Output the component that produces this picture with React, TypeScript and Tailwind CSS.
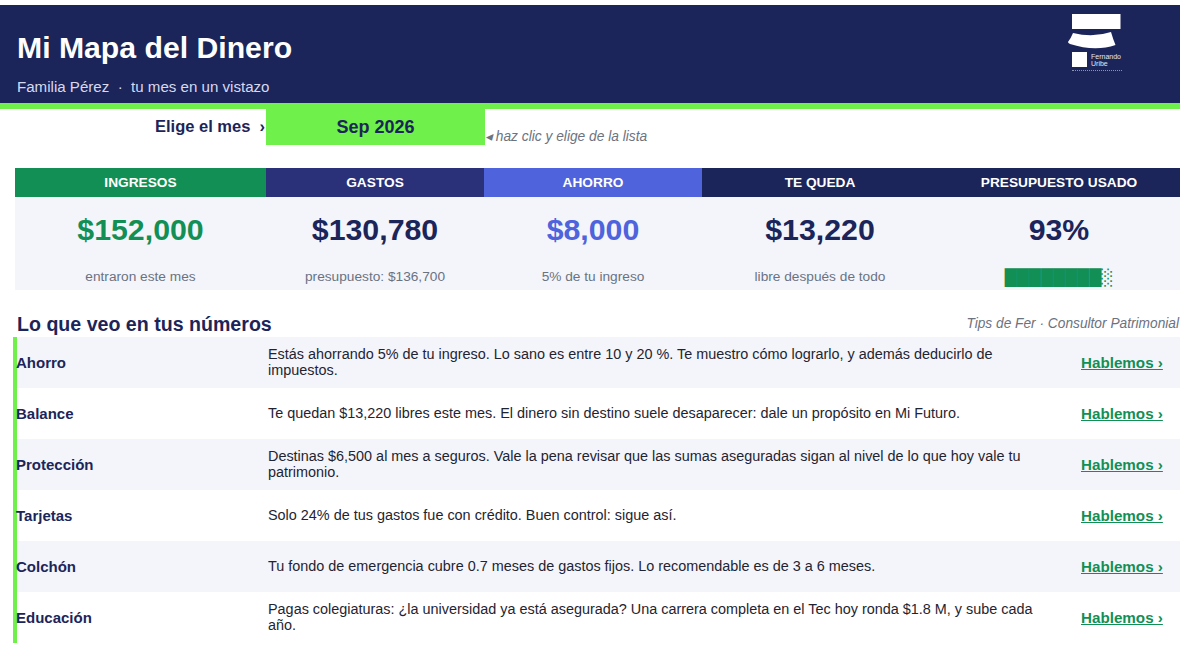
const kpis = [
  { label: "INGRESOS", head: "bg-[#128f55]", value: "$152,000", color: "text-[#128f55]", note: "entraron este mes" },
  { label: "GASTOS", head: "bg-[#2a3178]", value: "$130,780", color: "text-[#1c2559]", note: "presupuesto: $136,700" },
  { label: "AHORRO", head: "bg-[#4e63dc]", value: "$8,000", color: "text-[#4e63dc]", note: "5% de tu ingreso" },
  { label: "TE QUEDA", head: "bg-[#1c2559]", value: "$13,220", color: "text-[#1c2559]", note: "libre después de todo" },
  { label: "PRESUPUESTO USADO", head: "bg-[#1c2559]", value: "93%", color: "text-[#1c2559]", note: "" },
];

const tips = [
  { title: "Ahorro", text: "Estás ahorrando 5% de tu ingreso. Lo sano es entre 10 y 20 %. Te muestro cómo lograrlo, y además deducirlo de impuestos." },
  { title: "Balance", text: "Te quedan $13,220 libres este mes. El dinero sin destino suele desaparecer: dale un propósito en Mi Futuro." },
  { title: "Protección", text: "Destinas $6,500 al mes a seguros. Vale la pena revisar que las sumas aseguradas sigan al nivel de lo que hoy vale tu patrimonio." },
  { title: "Tarjetas", text: "Solo 24% de tus gastos fue con crédito. Buen control: sigue así." },
  { title: "Colchón", text: "Tu fondo de emergencia cubre 0.7 meses de gastos fijos. Lo recomendable es de 3 a 6 meses." },
  { title: "Educación", text: "Pagas colegiaturas: ¿la universidad ya está asegurada? Una carrera completa en el Tec hoy ronda $1.8 M, y sube cada año." },
];

function Logo() {
  return (
    <div className="flex w-[50px] flex-col">
      <svg width="50" height="38" viewBox="0 0 50 38" className="overflow-visible" aria-hidden="true">
        <rect x="1" y="0" width="48.5" height="15" fill="#fff" />
        <path d="M2 19 Q22 24 40 18 Q42 25 44.5 31 Q24 38 -1 30 Q-3 29 -3 28 Q0 24 2 19 Z" fill="#fff" />
      </svg>
      <div className="flex items-center gap-[4px] pl-[1px]">
        <div className="h-[15px] w-[16px] bg-white" />
        <div className="text-[7px] leading-[7px] text-[#e4e6f0]">
          Fernando
          <br />
          Uribe
        </div>
      </div>
      <div className="mt-[3px] ml-[1px] h-[1px] w-[50px] border-t border-dotted border-white/50" />
    </div>
  );
}

export default function App() {
  return (
    <div className="h-[645px] w-[1182px] overflow-hidden bg-white pt-[5px] pr-[2px] font-['Liberation_Sans',Arial,sans-serif]">
      <header className="flex h-[98px] justify-between bg-[#1c2559] pt-[9px] pr-[59px] pl-[17px]">
        <div>
          <h1 className="mt-[14px] text-[30.2px] leading-[40px] font-bold text-white">Mi Mapa del Dinero</h1>
          <p className="mt-[10px] text-[15.1px] leading-[18px] text-[#d6daf0]">Familia Pérez &nbsp;·&nbsp; tu mes en un vistazo</p>
        </div>
        <Logo />
      </header>
      <div className="h-[6px] bg-[#6ff04a]" />

      <div className="flex h-[36px]">
        <div className="flex w-[266px] items-center justify-end pr-[1px] pb-[1px] text-[16.5px] font-bold text-[#1c2559]">Elige el mes &nbsp;›</div>
        <div className="flex w-[219px] items-center justify-center bg-[#6ff04a] text-[18px] font-bold text-[#1c2559]">Sep 2026</div>
        <div className="flex items-end text-[13.75px] leading-[17px] text-[#6b7280] italic">◂ haz clic y elige de la lista</div>
      </div>

      <div className="mt-[23px] ml-[15px] grid grid-cols-[251px_218px_218px_236px_242px]">
        {kpis.map((kpi) => (
          <div key={kpi.label} className="flex flex-col items-center bg-[#f3f5fb]">
            <div className={`flex h-[29px] w-full items-center justify-center pt-[1px] text-[13.7px] font-bold text-white ${kpi.head}`}>{kpi.label}</div>
            <div className={`mt-[14px] text-[30.3px] leading-[37px] font-bold ${kpi.color}`}>{kpi.value}</div>
            <div className="mt-[13px] flex h-[29px] items-start pt-[7px] text-[13.7px] leading-[18px] text-[#6b7280]">
              {kpi.note || <span className="mt-[-2px] font-['DejaVu_Sans',sans-serif] text-[15.7px] leading-[23px] text-[#128f55]">████████░</span>}
            </div>
          </div>
        ))}
      </div>

      <div className="mt-[22px] ml-[17px] flex h-[25px] items-center justify-between pr-[1px]">
        <h2 className="text-[19.6px] font-bold text-[#1c2559]">Lo que veo en tus números</h2>
        <span className="text-[13.72px] text-[#6b7280] italic">Tips de Fer · Consultor Patrimonial</span>
      </div>

      <div className="ml-[13px] border-l-4 border-[#6ff04a]">
        {tips.map((tip, i) => (
          <div key={tip.title} className={`grid h-[51px] grid-cols-[251px_780px_1fr] items-center ${i % 2 === 0 ? "bg-[#f3f5fb]" : "bg-white"}`}>
            <div className="-ml-[1px] pt-[1px] text-[15px] font-bold text-[#1c2559]">{tip.title}</div>
            <div className="pb-[2px] text-[14.42px] leading-[16px] text-[#1f2430]">{tip.text}</div>
            <a className="pt-[1px] pl-[33px] text-[15.2px] font-bold whitespace-nowrap text-[#128f55] underline">Hablemos ›</a>
          </div>
        ))}
      </div>
    </div>
  );
}
